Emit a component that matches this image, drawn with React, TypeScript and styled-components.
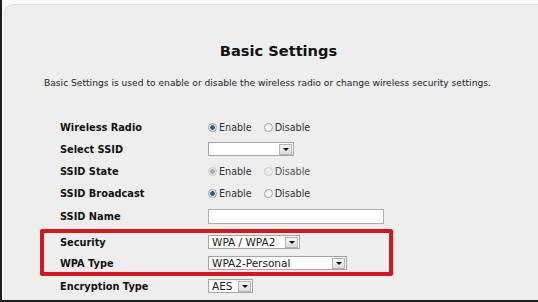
import React from 'react'
import styled, { createGlobalStyle } from 'styled-components'

const Global = createGlobalStyle`
  html, body {
    margin: 0;
    padding: 0;
    background: #fafafa;
    overflow: hidden;
  }
`

const Frame = styled.div`
  width: 538px;
  height: 302px;
  box-sizing: border-box;
  border-left: 2px solid #1e1e1e;
  border-bottom: 2px solid #1e1e1e;
  padding: 4px 0 0 2px;
  display: flex;
`

const Panel = styled.div`
  flex: 1;
  background: #eeeeee;
  border-radius: 9px 0 0 0;
  border-top: 1px solid #e2e2e2;
  border-left: 1px solid #e2e2e2;
  display: flex;
  flex-direction: column;
  font-family: 'DejaVu Sans', Verdana, sans-serif;
  color: #111;
`

const Title = styled.h1`
  margin: 36px 0 0 0;
  padding-left: 14px;
  text-align: center;
  font-size: 14.6px;
  font-weight: bold;
  line-height: 20px;
`

const Intro = styled.p`
  margin: 15px 0 0 39px;
  font-size: 9.15px;
  line-height: 14px;
  color: #222;
`

const Form = styled.div`
  margin: 26px 0 0 55px;
  display: flex;
  flex-direction: column;
`

const Highlight = styled.div`
  margin-left: -20px;
  width: 353px;
  box-sizing: border-box;
  border: 4px solid #d6151d;
  border-radius: 2px;
  padding-left: 16px;
  display: flex;
  flex-direction: column;
  gap: 3px;
`

const Row = styled.div<{ $h: number }>`
  height: ${p => p.$h}px;
  display: flex;
  align-items: center;
`

const Label = styled.div`
  width: 148px;
  flex: none;
  font-size: 9.8px;
  font-weight: bold;
  color: #111;
`

const RadioGroup = styled.div`
  display: flex;
  align-items: center;
  gap: 12px;
  font-size: 9.6px;
  color: #333;
`

const RadioItem = styled.span<{ $off?: boolean }>`
  display: flex;
  align-items: center;
  gap: 2px;
  color: ${p => (p.$off ? '#555' : '#333')};
`

const Dot = styled.span<{ $on?: boolean; $off?: boolean }>`
  width: 9px;
  height: 9px;
  border-radius: 50%;
  box-sizing: border-box;
  border: 1px solid ${p => (p.$off ? '#c9c9c9' : '#9aa3ad')};
  background: ${p =>
    p.$on
      ? p.$off
        ? 'radial-gradient(circle, #a9a9a9 0 2px, #e8e8e8 2.5px)'
        : 'radial-gradient(circle, #1f5f9a 0 2px, #dfe6ee 2.5px)'
      : p.$off
        ? '#ececec'
        : '#f4f4f4'};
`

const Select = styled.div<{ $w: number }>`
  width: ${p => p.$w}px;
  height: 14px;
  box-sizing: border-box;
  border: 1px solid #a5a5a5;
  background: #fff;
  display: flex;
  align-items: center;
  font-size: 10.5px;
  color: #222;
`

const SelectText = styled.span`
  flex: 1;
  padding-left: 3px;
  white-space: nowrap;
`

const Arrow = styled.span`
  width: 13px;
  height: 11px;
  margin-right: 1px;
  box-sizing: border-box;
  border: 1px solid #b5b5b5;
  background: linear-gradient(#f6f6f6, #dcdcdc);
  display: flex;
  align-items: center;
  justify-content: center;

  &::after {
    content: '';
    border-left: 3px solid transparent;
    border-right: 3px solid transparent;
    border-top: 3px solid #111;
  }
`

const TextInput = styled.div`
  width: 176px;
  height: 15px;
  box-sizing: border-box;
  border: 1px solid #b0b0b0;
  background: #fff;
`

const Radios = ({ on, off }: { on?: boolean; off?: boolean }) => (
  <RadioGroup>
    <RadioItem>
      <Dot $on={on} $off={off} />
      Enable
    </RadioItem>
    <RadioItem $off={off}>
      <Dot $off={off} />
      Disable
    </RadioItem>
  </RadioGroup>
)

const Dropdown = ({ w, text }: { w: number; text?: string }) => (
  <Select $w={w}>
    <SelectText>{text}</SelectText>
    <Arrow />
  </Select>
)

export default function App() {
  return (
    <>
      <Global />
      <Frame>
        <Panel>
          <Title>Basic Settings</Title>
          <Intro>
            Basic Settings is used to enable or disable the wireless radio or change wireless security settings.
          </Intro>
          <Form>
            <Row $h={22}>
              <Label>Wireless Radio</Label>
              <Radios on />
            </Row>
            <Row $h={22}>
              <Label>Select SSID</Label>
              <Dropdown w={86} />
            </Row>
            <Row $h={22}>
              <Label>SSID State</Label>
              <Radios on off />
            </Row>
            <Row $h={22}>
              <Label>SSID Broadcast</Label>
              <Radios on />
            </Row>
            <Row $h={25}>
              <Label>SSID Name</Label>
              <TextInput />
            </Row>
            <Highlight>
              <Row $h={18}>
                <Label>Security</Label>
                <Dropdown w={92} text="WPA / WPA2" />
              </Row>
              <Row $h={18}>
                <Label>WPA Type</Label>
                <Dropdown w={139} text="WPA2-Personal" />
              </Row>
            </Highlight>
            <Row $h={20}>
              <Label>Encryption Type</Label>
              <Dropdown w={45} text="AES" />
            </Row>
          </Form>
        </Panel>
      </Frame>
    </>
  )
}
